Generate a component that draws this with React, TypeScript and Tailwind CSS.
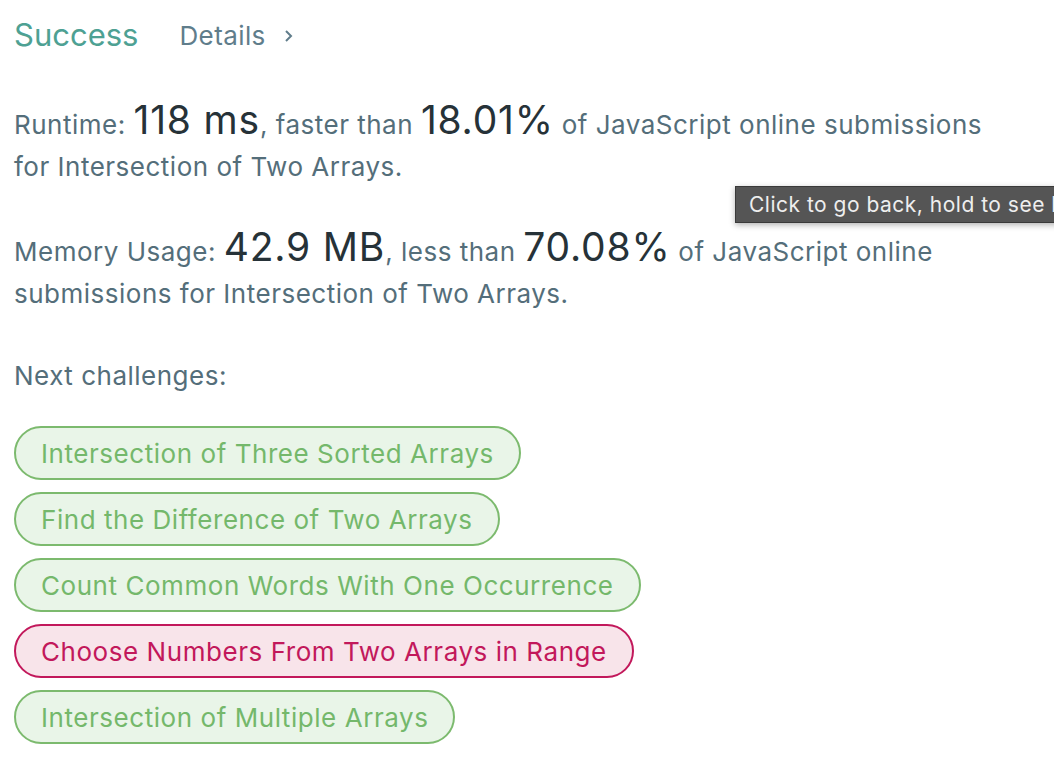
const challenges = [
  { name: "Intersection of Three Sorted Arrays", hard: false },
  { name: "Find the Difference of Two Arrays", hard: false },
  { name: "Count Common Words With One Occurrence", hard: false },
  { name: "Choose Numbers From Two Arrays in Range", hard: true },
  { name: "Intersection of Multiple Arrays", hard: false },
];

const App = () => {
  return (
    <div className="relative w-[1054px] h-[768px] overflow-hidden bg-white font-['Inter',sans-serif] text-[#546e7a]">
      <div className="pl-[14px]">
        {/* header */}
        <div className="flex items-center h-[72px] -mt-[1px]">
          <span className="text-[31px] text-[#4ea193]">Success</span>
          <span className="ml-[41px] text-[26px] tracking-[0.4px] text-[#607d8b]">Details</span>
          <svg className="ml-[16px] mt-[2px]" width="14" height="14" viewBox="0 0 14 14">
            <path d="M4 2 L9 7 L4 12" fill="none" stroke="#607d8b" strokeWidth="2" />
          </svg>
        </div>

        {/* stats */}
        <div className="mt-[28px] text-[26px] tracking-[0.5px] leading-[42px] w-[1000px]">
          <p>
            Runtime: <span className="text-[39px] tracking-[0.8px] text-[#263238]">118 ms</span>, faster than{" "}
            <span className="text-[39px] tracking-[0.8px] text-[#263238]">18.01%</span> of JavaScript online
            submissions for Intersection of Two Arrays.
          </p>
        </div>
        <div className="mt-[38px] text-[26px] tracking-[0.5px] leading-[42px] w-[930px]">
          <p>
            Memory Usage: <span className="text-[39px] tracking-[0.8px] text-[#263238]">42.9 MB</span>, less than{" "}
            <span className="text-[39px] tracking-[0.8px] text-[#263238]">70.08%</span> of JavaScript online
            submissions for Intersection of Two Arrays.
          </p>
        </div>

        <div className="mt-[40px] text-[26px] tracking-[0.5px] leading-[42px]">Next challenges:</div>

        {/* challenge pills */}
        <div className="mt-[29px] flex flex-col items-start gap-[12px]">
          {challenges.map((c) => (
            <div
              key={c.name}
              className={
                c.hard
                  ? "h-[54px] px-[25px] flex items-center rounded-full border-2 border-[#c2185b] bg-[#f8e4ea] text-[#c2185b] text-[26px] tracking-[0.55px]"
                  : "h-[54px] px-[25px] flex items-center rounded-full border-2 border-[#7cba6e] bg-[#e9f5e8] text-[#74b86b] text-[26px] tracking-[0.55px]"
              }
            >
              {c.name}
            </div>
          ))}
        </div>
      </div>

      {/* tooltip */}
      <div className="absolute left-[735px] top-[186px] h-[37px] pl-[13px] pr-[20px] flex items-center whitespace-nowrap bg-[#555555] border border-[#3a3a3a] text-[#eeeeee] text-[21px] tracking-[0.5px] shadow-[0_2px_6px_rgba(0,0,0,0.3)]">
        Click to go back, hold to see history
      </div>
    </div>
  );
};

export default App;
